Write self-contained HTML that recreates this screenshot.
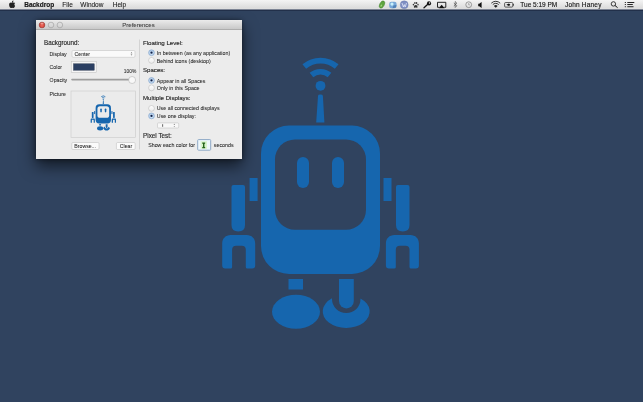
<!DOCTYPE html>
<html><head><meta charset="utf-8">
<style>
html,body{margin:0;padding:0;width:643px;height:402px;overflow:hidden;background:#30435f;}
svg{position:absolute;left:0;top:0;display:block;}
text{font-family:"Liberation Sans",sans-serif;stroke:#262626;stroke-width:0.06;}
svg{will-change:transform;}
#win{position:absolute;left:36px;top:20px;width:206px;height:138.5px;border-radius:3px 3px 0 0;box-shadow:0 7px 16px rgba(0,0,0,0.62),0 0 4px rgba(0,0,0,0.45);background:#ececec;}
</style></head>
<body>
<div id="win"></div>
<svg width="643" height="402" viewBox="0 0 643 402">
<defs>
  <linearGradient id="mb" x1="0" y1="0" x2="0" y2="1">
    <stop offset="0" stop-color="#f4f4f4"/><stop offset="1" stop-color="#d9d9d9"/>
  </linearGradient>
  <linearGradient id="tb" x1="0" y1="0" x2="0" y2="1">
    <stop offset="0" stop-color="#ebebeb"/><stop offset="1" stop-color="#c6c6c6"/>
  </linearGradient>
  <radialGradient id="red" cx="0.5" cy="0.6" r="0.6">
    <stop offset="0" stop-color="#f06a5e"/><stop offset="1" stop-color="#c8372f"/>
  </radialGradient>
  <linearGradient id="gry" x1="0" y1="0" x2="0" y2="1">
    <stop offset="0" stop-color="#e2e2e2"/><stop offset="1" stop-color="#d0d0d0"/>
  </linearGradient>
  <linearGradient id="rad" x1="0" y1="0" x2="0" y2="1">
    <stop offset="0" stop-color="#ffffff"/><stop offset="1" stop-color="#ececec"/>
  </linearGradient>
  <radialGradient id="rsel" cx="0.5" cy="0.55" r="0.6">
    <stop offset="0" stop-color="#e6f2fc"/><stop offset="1" stop-color="#9ec0e6"/>
  </radialGradient>
  <g id="robot" fill="#1666ae">
    <path d="M304.3,66.5 A25.2,25.2 0 0 1 336.7,66.5" fill="none" stroke="#1666ae" stroke-width="5.7"/>
    <path d="M311.47,75.04 A14.05,14.05 0 0 1 329.53,75.04" fill="none" stroke="#1666ae" stroke-width="5.7"/>
    <circle cx="320.5" cy="85.8" r="4.9"/>
    <path d="M318,96 Q318,94.6 320.4,94.6 Q322.9,94.6 322.9,96 L324.4,122.6 L316.2,122.6 Z"/>
    <rect x="261" y="125.5" width="119" height="148.5" rx="28"/>
    <rect x="275" y="139.5" width="91" height="90.3" rx="20" fill="currentColor"/>
    <rect x="297" y="157" width="12" height="31" rx="6" fill="#1666ae"/>
    <rect x="332" y="157" width="12" height="31" rx="6" fill="#1666ae"/>
    <rect x="249.6" y="178" width="8" height="23"/>
    <rect x="383.5" y="178" width="8" height="23"/>
    <path d="M231.5,187 Q231.5,185 233.5,185 L243,185 Q245,185 245,187 L245,225 Q245,231.5 238.25,231.5 Q231.5,231.5 231.5,225 Z"/>
    <path d="M396,187 Q396,185 398,185 L407.5,185 Q409.5,185 409.5,187 L409.5,225 Q409.5,231.5 402.75,231.5 Q396,231.5 396,225 Z"/>
    <path d="M222.2,265 L222.2,243.5 C222.2,238.5 225.7,235 230.7,235 L246.7,235 C251.7,235 255.2,238.5 255.2,243.5 L255.2,265.5 Q255.2,268.5 252.2,268.5 L247.29999999999998,268.5 Q245.79999999999998,268.5 245.79999999999998,267 L245.79999999999998,249.7 Q245.79999999999998,245.7 241.79999999999998,245.7 L236.1,245.7 Q232.1,245.7 232.1,249.7 L232.1,267 Q232.1,268.5 230.6,268.5 L225.2,268.5 Q222.2,268.5 222.2,265.5 Z"/>
    <path d="M385.9,265 L385.9,243.5 C385.9,238.5 389.4,235 394.4,235 L410.4,235 C415.4,235 418.9,238.5 418.9,243.5 L418.9,265.5 Q418.9,268.5 415.9,268.5 L411.0,268.5 Q409.5,268.5 409.5,267 L409.5,249.7 Q409.5,245.7 405.5,245.7 L399.79999999999995,245.7 Q395.79999999999995,245.7 395.79999999999995,249.7 L395.79999999999995,267 Q395.79999999999995,268.5 394.29999999999995,268.5 L388.9,268.5 Q385.9,268.5 385.9,265.5 Z"/>
    <rect x="288.5" y="279" width="14.5" height="10.5"/>
    <ellipse cx="296" cy="311.7" rx="24" ry="17"/>
    <path d="M339,279 L353.8,279 L353.8,301 A7.4,7.4 0 0 1 339,301 Z"/>
    <path d="M332,298.35 A23.5,16.5 0 1 0 360.5,298.4 L360.5,299 A14.25,14 0 0 1 332,299 Z"/>
  </g>
</defs>
<!-- menu bar -->
<rect x="0" y="0" width="643" height="9" fill="url(#mb)"/>
<rect x="0" y="8" width="643" height="1" fill="#dedede"/>
<rect x="0" y="9" width="643" height="1" fill="#7d8494"/>
<rect x="0" y="10" width="643" height="1" fill="#22304a"/>
<g fill="#111" font-size="6.5" style="stroke-width:0.05">
<path d="M12.6,2.4 C13.2,1.7 13.6,1.2 13.5,0.5 C12.9,0.6 12.3,1 12.1,1.6 C11.9,2 11.8,2.6 11.9,2.7 C12.2,2.8 12.4,2.6 12.6,2.4 Z M14.9,5.6 C14.6,5.3 14.4,4.9 14.4,4.4 C14.4,3.8 14.8,3.3 15.2,3.1 C14.8,2.6 14.3,2.4 13.7,2.4 C13.1,2.4 12.8,2.7 12.3,2.7 C11.8,2.7 11.4,2.4 10.9,2.4 C10,2.4 9.1,3.2 9.1,4.7 C9.1,6.2 10.1,8 10.9,8 C11.4,8 11.6,7.7 12.2,7.7 C12.8,7.7 13,8 13.5,8 C14.2,8 14.8,6.7 15.1,6 C15,5.9 14.9,5.7 14.9,5.6 Z" fill="#222"/>
<text x="24.2" y="7" font-weight="bold" style="stroke-width:0.15">Backdrop</text>
<text x="62.3" y="7">File</text>
<text x="80.3" y="7">Window</text>
<text x="112.7" y="7">Help</text>
<text x="520.3" y="7" style="stroke-width:0.13">Tue 5:19 PM</text>
<text x="565" y="7" style="stroke-width:0.13" textLength="36.4" lengthAdjust="spacing">John Haney</text>
</g>
<!-- menu icons -->
<g>
<ellipse cx="382" cy="4.5" rx="3.9" ry="2.3" transform="rotate(-62 382 4.5)" fill="#5ea43f" stroke="#3f7d2a" stroke-width="0.4"/>
<ellipse cx="381.3" cy="5.6" rx="1.2" ry="0.7" transform="rotate(-62 381.3 5.6)" fill="#9fd27a"/>
<rect x="389.2" y="1.8" width="7.4" height="6.4" rx="2.2" fill="#78a8d8"/>
<path d="M393.5,5.5 L396.4,5 L396,7.6 L392.5,8.2 Z" fill="#4f80b6"/>
<circle cx="392" cy="4.1" r="1.6" fill="#c8f0fc"/>
<circle cx="404.2" cy="4.75" r="4" fill="#7f8fc2" stroke="#5f6fa3" stroke-width="0.3"/>
<path d="M402,3 L403.4,7 L404.3,4.6 L405.2,7 L406.5,3" fill="none" stroke="#eef2ff" stroke-width="0.7"/>
<g fill="#333">
<ellipse cx="413.4" cy="4.6" rx="0.7" ry="0.9"/><ellipse cx="414.9" cy="3" rx="0.7" ry="0.9"/><ellipse cx="416.6" cy="3" rx="0.7" ry="0.9"/><ellipse cx="418" cy="4.6" rx="0.7" ry="0.9"/>
<path d="M415.7,5 C414.2,5 413.6,6.6 414,7.4 C414.4,8 415.2,7.5 415.7,7.5 C416.2,7.5 417,8 417.4,7.4 C417.8,6.6 417.2,5 415.7,5 Z"/>
</g>
<circle cx="429" cy="3.4" r="2.1" fill="#111"/>
<circle cx="429.5" cy="3" r="0.7" fill="#eee"/>
<path d="M427.8,4.3 L424,7.8" stroke="#111" stroke-width="1.3" stroke-linecap="round"/>
<path d="M437.5,2.3 h8.3 v5 h-1.6 M439.3,7.3 h-1.8 v-5" fill="none" stroke="#111" stroke-width="0.9"/>
<path d="M438.6,8.3 L441.65,4.8 L444.7,8.3 Z" fill="#111"/>
<path d="M453.8,3 L456.9,5.8 L455.2,7.5 L455.2,1.5 L456.9,3.2 L453.8,6" fill="none" stroke="#444" stroke-width="0.6"/>
<circle cx="468.7" cy="4.7" r="2.9" fill="none" stroke="#777" stroke-width="0.7"/>
<path d="M468.7,3 v1.8 h1.1" fill="none" stroke="#777" stroke-width="0.55"/>
<path d="M478.2,3.8 h1 l2.4,-1.8 v6 l-2.4,-1.8 h-1 z" fill="#111"/>
<path d="M491.3,3.2 A6.2,6.2 0 0 1 500.2,3.2" fill="none" stroke="#222" stroke-width="0.9"/>
<path d="M492.8,4.6 A4.1,4.1 0 0 1 498.7,4.6" fill="none" stroke="#222" stroke-width="0.9"/>
<path d="M495.75,7.8 L493.9,5.9 A2.6,2.6 0 0 1 497.6,5.9 Z" fill="#222"/>
<rect x="504.6" y="2.5" width="8.2" height="4.6" rx="1" fill="none" stroke="#222" stroke-width="0.7"/>
<rect x="512.9" y="3.9" width="0.8" height="1.8" fill="#222"/>
<path d="M506.3,4.8 L509,3.6 L510.3,4.8 L509,6 Z" fill="#111"/>
<circle cx="613.4" cy="3.9" r="2.2" fill="none" stroke="#111" stroke-width="0.8"/>
<path d="M615,5.5 L617.6,7.7" stroke="#111" stroke-width="1"/>
<g fill="#111">
<rect x="624.8" y="2" width="1.1" height="0.9"/><rect x="627.3" y="2" width="7" height="0.9"/>
<rect x="624.8" y="4.1" width="1.1" height="0.9"/><rect x="627.3" y="4.1" width="5.5" height="0.9"/>
<rect x="624.8" y="6.3" width="1.1" height="0.9"/><rect x="627.3" y="6.3" width="6.2" height="0.9"/>
</g>
</g>
<!-- window -->
<rect x="36" y="20" width="206" height="9.6" fill="url(#tb)"/>
<rect x="36" y="29.2" width="206" height="0.6" fill="#929292"/>
<circle cx="42" cy="25" r="2.85" fill="url(#red)" stroke="#8e2f2b" stroke-width="0.55"/>
<ellipse cx="42" cy="23.6" rx="1.6" ry="0.9" fill="#f6b0a8" opacity="0.8"/>
<circle cx="51" cy="25" r="2.8" fill="url(#gry)" stroke="#959595" stroke-width="0.55"/>
<circle cx="59.9" cy="25" r="2.8" fill="url(#gry)" stroke="#959595" stroke-width="0.55"/>
<text x="122.3" y="27.2" font-size="6" fill="#3a3a3a" style="stroke:#3a3a3a;stroke-width:0.06">Preferences</text>

<g fill="#262626">
<text style="stroke-width:0.14" x="44" y="45" font-size="6.3" textLength="35.3" lengthAdjust="spacing">Background:</text>
<text x="49.6" y="55.6" font-size="5.56" textLength="17.05" lengthAdjust="spacingAndGlyphs">Display</text>
<text x="49.6" y="68.6" font-size="5.56" textLength="12.43" lengthAdjust="spacingAndGlyphs">Color</text>
<text x="49.6" y="82.2" font-size="5.56" textLength="17.63" lengthAdjust="spacingAndGlyphs">Opacity</text>
<text x="49.6" y="96" font-size="5.56" textLength="16.18" lengthAdjust="spacingAndGlyphs">Picture</text>
<text x="123.8" y="73" font-size="4.9">100%</text>
</g>
<!-- display popup -->
<rect x="72" y="50.5" width="63" height="6.8" rx="1.2" fill="#fafafa" stroke="#bdbdbd" stroke-width="0.5"/>
<text x="74.5" y="55.9" font-size="5.56" textLength="15.61" lengthAdjust="spacingAndGlyphs" fill="#222">Center</text>
<path d="M131.5,52.3 l0.9,1 h-1.8z M131.5,55.6 l0.9,-1 h-1.8z" fill="#555"/>
<!-- color well -->
<rect x="71.2" y="61.3" width="25" height="11" fill="#f6f6f6" stroke="#bcbcbc" stroke-width="0.5"/>
<rect x="73.5" y="63.8" width="20.7" height="6.4" fill="#2b3f62" stroke="#1c2a44" stroke-width="0.4"/>
<!-- slider -->
<rect x="71.2" y="78.8" width="61" height="1.6" rx="0.8" fill="#9d9d9d"/>
<circle cx="132.1" cy="80" r="3.5" fill="#f8f8f8" stroke="#a8a8a8" stroke-width="0.5"/>
<!-- picture well -->
<rect x="71" y="91" width="64.5" height="46.3" fill="#ebebeb" stroke="#c9c9c9" stroke-width="0.6"/>
<use href="#robot" style="color:#ebebeb" transform="translate(103.3,113) scale(0.129) translate(-320.5,-192.75)"/>
<!-- buttons -->
<rect x="71.8" y="142.5" width="27.2" height="7" rx="1.2" fill="#fbfbfb" stroke="#b9b9b9" stroke-width="0.5"/>
<text x="74.3" y="148.3" font-size="5.56" textLength="21.67" lengthAdjust="spacingAndGlyphs" fill="#222">Browse...</text>
<rect x="116.4" y="142.5" width="18.8" height="7" rx="1.2" fill="#fbfbfb" stroke="#b9b9b9" stroke-width="0.5"/>
<text x="119.8" y="148.3" font-size="5.56" textLength="12.43" lengthAdjust="spacingAndGlyphs" fill="#222">Clear</text>
<!-- divider -->
<rect x="139.4" y="39.5" width="0.6" height="110" fill="#c4c4c4"/>
<!-- right column -->
<g fill="#262626">
<text style="stroke-width:0.14" x="143" y="45.1" font-size="6.2" textLength="39.7" lengthAdjust="spacing">Floating Level:</text>
<text x="156.8" y="54.9" font-size="5.67" textLength="73.36" lengthAdjust="spacingAndGlyphs">In between (as any application)</text>
<text x="156.8" y="62.5" font-size="5.67" textLength="53.91" lengthAdjust="spacingAndGlyphs">Behind icons (desktop)</text>
<text style="stroke-width:0.14" x="143" y="72.4" font-size="6.1">Spaces:</text>
<text x="156.8" y="82.6" font-size="5.67" textLength="48.61" lengthAdjust="spacingAndGlyphs">Appear in all Spaces</text>
<text x="156.8" y="90.1" font-size="5.67" textLength="42.72" lengthAdjust="spacingAndGlyphs">Only in this Space</text>
<text style="stroke-width:0.14" x="143" y="100.4" font-size="6.1">Multiple Displays:</text>
<text x="156.8" y="110.4" font-size="5.67" textLength="62.75" lengthAdjust="spacingAndGlyphs">Use all connected displays</text>
<text x="156.8" y="117.9" font-size="5.67" textLength="39.20" lengthAdjust="spacingAndGlyphs">Use one display:</text>
<text style="stroke-width:0.14" x="143" y="138.4" font-size="6.3" textLength="28.8" lengthAdjust="spacing">Pixel Test:</text>
<text x="148.2" y="146.7" font-size="5.67" textLength="46.84" lengthAdjust="spacingAndGlyphs">Show each color for</text>
<text x="213.8" y="146.7" font-size="5.67" textLength="19.74" lengthAdjust="spacingAndGlyphs">seconds</text>
</g>
<!-- radios -->
<g stroke-width="0.5">
<circle cx="151.5" cy="52.7" r="2.9" fill="url(#rsel)" stroke="#7d9cc4"/><circle cx="151.5" cy="52.7" r="1.15" fill="#0c1f48" stroke="none"/>
<circle cx="151.5" cy="60.4" r="2.9" fill="url(#rad)" stroke="#b2b2b2"/>
<circle cx="151.5" cy="80.4" r="2.9" fill="url(#rsel)" stroke="#7d9cc4"/><circle cx="151.5" cy="80.4" r="1.15" fill="#0c1f48" stroke="none"/>
<circle cx="151.5" cy="87.9" r="2.9" fill="url(#rad)" stroke="#b2b2b2"/>
<circle cx="151.5" cy="108.4" r="2.9" fill="url(#rad)" stroke="#b2b2b2"/>
<circle cx="151.5" cy="115.9" r="2.9" fill="url(#rsel)" stroke="#7d9cc4"/><circle cx="151.5" cy="115.9" r="1.15" fill="#0c1f48" stroke="none"/>
</g>
<!-- small popup -->
<rect x="157.5" y="122.9" width="21.2" height="5.1" rx="1" fill="#f8f8f8" stroke="#b6b6b6" stroke-width="0.45"/>
<rect x="162.3" y="124.2" width="0.8" height="2.6" fill="#444"/>
<path d="M174.3,123.8 l0.7,0.9 h-1.4z M174.3,127.1 l0.7,-0.9 h-1.4z" fill="#555"/>
<!-- text field -->
<rect x="197.7" y="139.6" width="13" height="10.6" rx="0.8" fill="#eef7fc" stroke="#8ea8c6" stroke-width="1"/>
<rect x="200.6" y="141.2" width="6.4" height="7.6" fill="#d9f3cc"/>
<path d="M202.2,142.6 h3 v0.9 l-0.8,0.6 v2.6 l0.8,0.6 v0.9 h-3 v-0.9 l0.8,-0.6 v-2.6 l-0.8,-0.6 z" fill="#24651a"/>

<!-- big robot -->
<use href="#robot" style="color:#30435f"/>
</svg>
</body></html>
